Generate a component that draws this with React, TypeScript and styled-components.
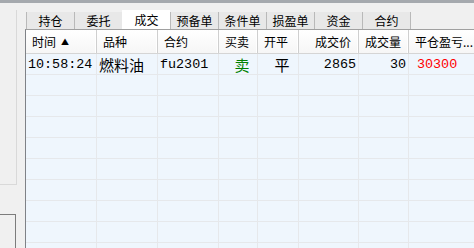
import React from 'react';
import styled, { createGlobalStyle } from 'styled-components';

const GlobalStyle = createGlobalStyle`
  html, body {
    margin: 0;
    padding: 0;
    background: #f0f0f0;
    overflow: hidden;
  }
  * {
    box-sizing: border-box;
  }
`;

const Page = styled.div`
  width: 474px;
  height: 248px;
  display: flex;
  flex-direction: column;
  overflow: hidden;
  font-family: 'Noto Sans CJK SC', 'Liberation Sans', sans-serif;
  color: #000;
`;

const TopStrip = styled.div`
  height: 3px;
  flex-shrink: 0;
  background: #a5a9ae;
`;

const Body = styled.div`
  flex: 1;
  display: flex;
  min-height: 0;
`;

const SideColumn = styled.div`
  width: 25px;
  flex-shrink: 0;
  display: flex;
  flex-direction: column;
`;

const SidePanel = styled.div`
  width: 17px;
  height: 175px;
  margin-top: 7px;
  border-right: 1px solid #d9d9d9;
  border-bottom: 1px solid #d9d9d9;
`;

const SideBox = styled.div`
  width: 16px;
  flex: 1;
  margin-top: 29px;
  border-top: 1px solid #7c7c7c;
  border-right: 1px solid #7c7c7c;
`;

const Main = styled.div`
  flex: 1;
  display: flex;
  flex-direction: column;
  min-width: 0;
`;

const TabBar = styled.div`
  display: flex;
  align-items: flex-end;
  height: 26px;
  padding-left: 1px;
  flex-shrink: 0;
`;

const Tab = styled.div<{ $active?: boolean }>`
  width: 48px;
  height: ${(p) => (p.$active ? '19px' : '17px')};
  display: flex;
  align-items: center;
  justify-content: center;
  font-size: 12px;
  background: ${(p) => (p.$active ? '#ffffff' : '#e8e8e8')};
  border-left: 1px solid ${(p) => (p.$active ? '#ffffff' : '#b9b9b9')};
  &:last-child {
    width: 49px;
    border-right: 1px solid #b9b9b9;
  }
`;

const Table = styled.div`
  flex: 1;
  border-top: 1px solid #a0a0a0;
  border-left: 1px solid #7f8287;
  background: #eff6fd;
  overflow: hidden;
`;

const COLS = '71px 61px 61px 39px 41px 60px 50px 100px';

const HeaderRow = styled.div`
  display: grid;
  grid-template-columns: ${COLS};
  height: 24px;
  background: linear-gradient(#ffffff, #f6f6f6);
  border-bottom: 1px solid #d5d5d5;
`;

const HeadCell = styled.div<{ $align?: string }>`
  display: flex;
  align-items: center;
  justify-content: ${(p) => p.$align || 'flex-start'};
  padding: 0 7px 0 6px;
  font-size: 12px;
  white-space: nowrap;
  overflow: hidden;
  border-right: 1px solid #cfcfcf;
  box-shadow: inset -1px 0 0 #ffffff;
`;

const SortMark = styled.span`
  font-size: 8px;
  margin-left: 5px;
`;

const Row = styled.div`
  display: grid;
  grid-template-columns: ${COLS};
  height: 21px;
  border-bottom: 1px solid #e6e8eb;
`;

const Cell = styled.div<{ $align?: string; $color?: string; $mono?: boolean; $indent?: number }>`
  display: flex;
  align-items: center;
  justify-content: ${(p) => p.$align || 'flex-start'};
  padding: 0 2px 0 ${(p) => p.$indent ?? 2}px;
  font-size: ${(p) => (p.$mono ? '13.4px' : '15px')};
  font-family: ${(p) =>
    p.$mono
      ? "'Liberation Mono', 'Noto Sans CJK SC', monospace"
      : "'Noto Sans CJK SC', 'Liberation Sans', sans-serif"};
  color: ${(p) => p.$color || '#000'};
  white-space: nowrap;
  overflow: hidden;
  border-right: 1px solid #e6e8eb;
`;

const tabs = ['持仓', '委托', '成交', '预备单', '条件单', '损盈单', '资金', '合约'];

const headers: { label: string; align?: string; sort?: boolean }[] = [
  { label: '时间', sort: true },
  { label: '品种' },
  { label: '合约' },
  { label: '买卖' },
  { label: '开平' },
  { label: '成交价', align: 'flex-end' },
  { label: '成交量', align: 'flex-end' },
  { label: '平仓盈亏...' },
];

export default function App() {
  const empty = Array.from({ length: 9 });
  return (
    <Page>
      <GlobalStyle />
      <TopStrip />
      <Body>
        <SideColumn>
          <SidePanel />
          <SideBox />
        </SideColumn>
        <Main>
          <TabBar>
            {tabs.map((t) => (
              <Tab key={t} $active={t === '成交'}>
                {t}
              </Tab>
            ))}
          </TabBar>
          <Table>
            <HeaderRow>
              {headers.map((h) => (
                <HeadCell key={h.label} $align={h.align}>
                  {h.label}
                  {h.sort && <SortMark>▲</SortMark>}
                </HeadCell>
              ))}
            </HeaderRow>
            <Row>
              <Cell $mono>10:58:24</Cell>
              <Cell>燃料油</Cell>
              <Cell $mono>fu2301</Cell>
              <Cell $align="center" $color="#008000" $indent={10}>
                卖
              </Cell>
              <Cell $align="center" $indent={10}>
                平
              </Cell>
              <Cell $mono $align="flex-end">
                2865
              </Cell>
              <Cell $mono $align="flex-end">
                30
              </Cell>
              <Cell $mono $color="#ff0000" $indent={8}>
                30300
              </Cell>
            </Row>
            {empty.map((_, i) => (
              <Row key={i}>
                {headers.map((h) => (
                  <Cell key={h.label} />
                ))}
              </Row>
            ))}
          </Table>
        </Main>
      </Body>
    </Page>
  );
}
